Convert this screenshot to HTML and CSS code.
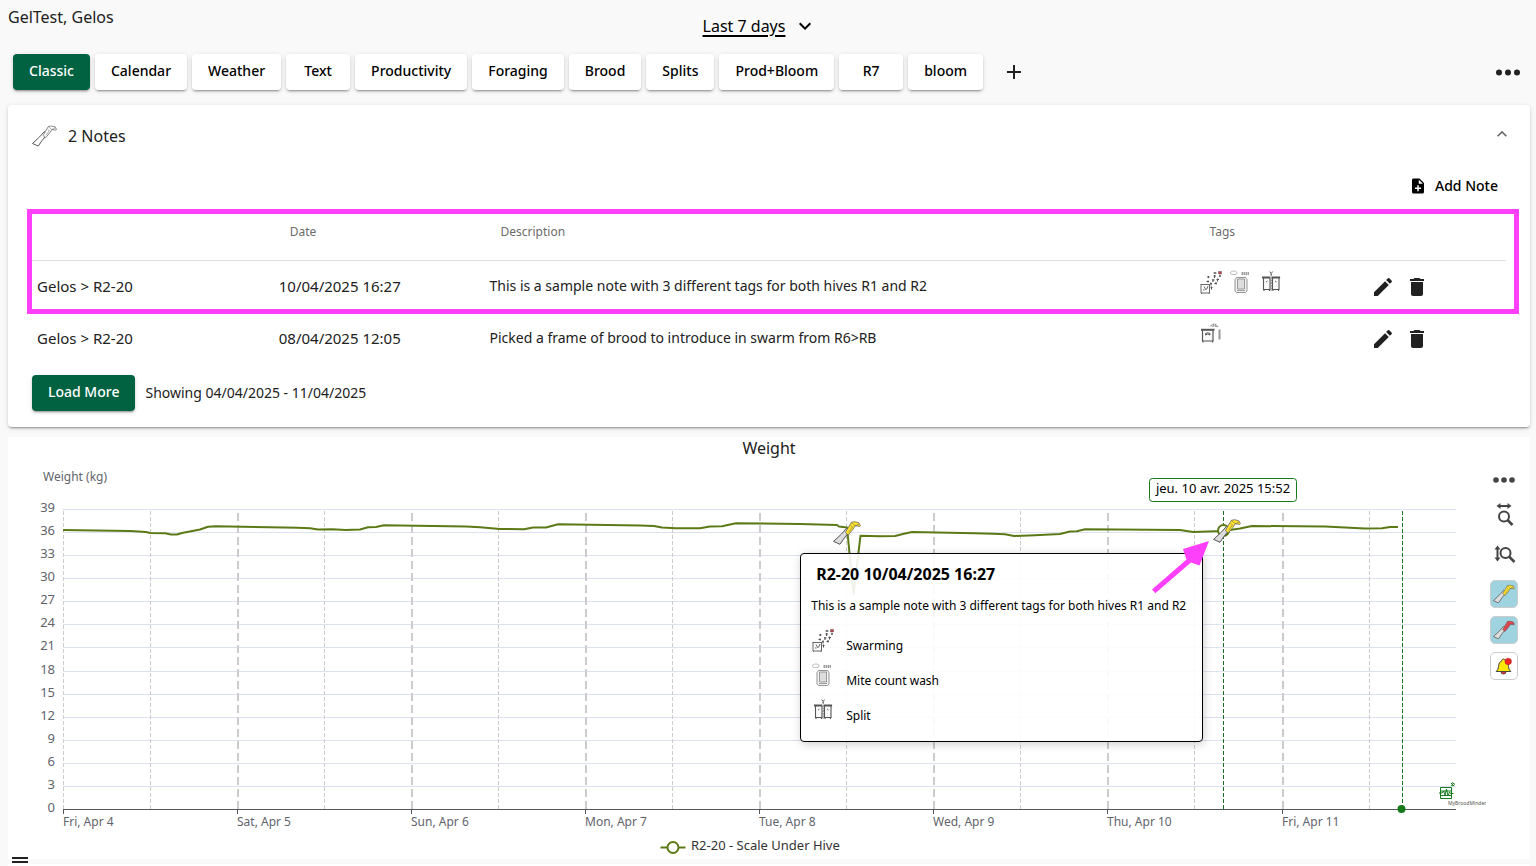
FILE: index.html
```html
<!DOCTYPE html>
<html lang="en">
<head>
<meta charset="utf-8">
<title>GelTest, Gelos</title>
<link rel="stylesheet" href="styles.css">
</head>
<body>
<svg class="sprite" aria-hidden="true">
  <symbol id="hive-tool" viewBox="0 0 28 24">
    <path class="tool-blade" d="M.6 20.4 7 23.3 11.3 17 17.2 9.6 13.6 7.2 8.5 13z"/>
    <path class="tool-handle" d="M12.4 11.5 18.3 1.3 21.5.7 25.8 1.7 27.4 4.6 26.8 5.4 22.3 4.8 20 8.3 15.3 14z"/>
    <path class="tool-detail" d="M18.3 1.3 22 4.8 26 3M17.5 4.5l2 1.5-4 5.5"/>
  </symbol>
  <symbol id="swarm" viewBox="0 0 24 24">
    <path d="M2 14.500h8.500V23H2zM1.500 14.500h9.500M5 16.500l2 3.500M9 16 7.500 19.500M4 20h1.500M2.500 23v1M10 23v1" fill="none" stroke="#666" stroke-width="1"/>
    <path d="M7.500 11.500h2.500M9 10.500v2M8 7h2.500M9.500 6v2M11.500 17.500h2M12.500 16.500v3M11 13.500h2M12 12.500v3M13 10h2.500M14 9v3M14.500 6h2.500M15.500 5v3M14.500 3h3M16 2v2M15.500 13.500h2.500M17 12v2.500M17.500 9.500h2.500M18.500 8.500v3M20 6h2M21 5v2" fill="none" stroke="#555" stroke-width="1.100"/>
    <path d="M19.500 1.500h3V4h-3z" fill="#c3404a" stroke="#555" stroke-width=".5"/>
  </symbol>
  <symbol id="mite" viewBox="0 0 24 24">
    <path d="M1.500 3c0-1.500 2-2 3.500-2s3 .5 3 2-1.500 1.500-3 1.500S1.500 4.500 1.500 3z" fill="#fff" stroke="#aaa" stroke-width=".8"/>
    <path d="M12.500 3.500h7.500M12.500 2.500h7.500M12.500 4.500h7.500" stroke="#888" stroke-width=".8" stroke-dasharray="1.500 .5"/>
    <path d="M7.500 7.500h9l1.500 2v11.500l-1.500 1.500h-9L6 21V9.500z" fill="#f2f2f2" stroke="#888" stroke-width=".9"/>
    <path d="M8.500 9h7v10h-7zM8 20.500h8" fill="#ddd" stroke="#888" stroke-width=".8"/>
  </symbol>
  <symbol id="split" viewBox="0 0 24 24">
    <path d="M4.500 8v11.500H11V8M13.500 8v11.500H20V8M5 19.500V21M10.500 19.500V21M14 19.500V21M19.500 19.500V21" fill="#fafafa" stroke="#555" stroke-width="1.100"/>
    <path d="M3 7.500h8.300M12.800 7.500h8.300" stroke="#555" stroke-width="2"/>
    <path d="M12.200 4v17" stroke="#888" stroke-width="1.200" stroke-dasharray="2 .7"/>
    <path d="m10.700 1.500 1.500 2 1.500-2M12.200 3.500V5M8.500 11 7 12M16 11l1.500 1" fill="none" stroke="#666" stroke-width="1"/>
  </symbol>
  <symbol id="brood-frame" viewBox="0 0 24 24">
    <path d="M3.500 8.500V19H14V8.500M4 19v1.500M13.500 19v1.500" fill="#fafafa" stroke="#555" stroke-width="1.200"/>
    <path d="M2 7.800h13.500" stroke="#555" stroke-width="2"/>
    <path d="M6.500 11.500q2.200-1.500 4.500 0V13Q8.700 11 6.500 13z" fill="none" stroke="#555" stroke-width="1"/>
    <path d="M11.500 4.500Q15-.5 19 5M13.500 4.500q2-2 4 .5" fill="none" stroke="#888" stroke-width="1.100" stroke-dasharray="2 .7"/>
    <path d="M20.500 7.500v10" stroke="#999" stroke-width="2"/>
  </symbol>
  <symbol id="pencil" viewBox="0 0 24 24"><path d="M3 17.250V21h3.750L17.810 9.940l-3.750-3.750zM20.710 7.040a1 1 0 0 0 0-1.410l-2.340-2.340a1 1 0 0 0-1.410 0l-1.830 1.830 3.750 3.750z"/></symbol>
  <symbol id="trash" viewBox="0 0 24 24"><path d="M6 19c0 1.100.9 2 2 2h8c1.100 0 2-.9 2-2V7H6zM19 4h-3.500l-1-1h-5l-1 1H5v2h14z"/></symbol>
</svg>

<header class="topbar">
  <h1 class="place">GelTest, Gelos</h1>
  <button class="range" aria-haspopup="listbox"><span class="range-text">Last 7 days</span>
    <svg class="icon-md" viewBox="0 0 24 24"><path d="M7.410 8.590 12 13.170l4.590-4.580L18 10l-6 6-6-6z"/></svg>
  </button>
</header>

<nav class="tabs">
  <button class="tab tab-active">Classic</button>
  <button class="tab">Calendar</button>
  <button class="tab">Weather</button>
  <button class="tab">Text</button>
  <button class="tab">Productivity</button>
  <button class="tab">Foraging</button>
  <button class="tab">Brood</button>
  <button class="tab">Splits</button>
  <button class="tab">Prod+Bloom</button>
  <button class="tab">R7</button>
  <button class="tab">bloom</button>
  <button class="plain add-tab" aria-label="Add tab"><svg class="icon-md" viewBox="0 0 24 24"><path d="M19 13h-6v6h-2v-6H5v-2h6V5h2v6h6z"/></svg></button>
  <button class="plain more" aria-label="More"><svg class="icon-lg" viewBox="0 0 28 28"><circle cx="5" cy="14.500" r="3"/><circle cx="14" cy="14.500" r="3"/><circle cx="23" cy="14.500" r="3"/></svg></button>
</nav>

<main>
  <section class="card notes">
    <div class="notes-head">
      <svg class="tool-outline" viewBox="0 0 28 24"><use href="#hive-tool"/></svg>
      <h2 class="notes-title">2 Notes</h2>
      <button class="plain collapse" aria-label="Collapse"><svg class="icon-sm" viewBox="0 0 24 24"><path d="m12 8-6 6 1.410 1.410L12 10.830l4.590 4.580L18 14z"/></svg></button>
    </div>
    <div class="notes-actions">
      <button class="plain add-note">
        <svg class="icon-xs" viewBox="0 0 24 24"><path d="M14 2H6c-1.100 0-2 .9-2 2v16c0 1.100.9 2 2 2h12c1.100 0 2-.9 2-2V8zm2 14h-3v3h-2v-3H8v-2h3v-3h2v3h3zm-3-7V3.500L18.500 9z"/></svg>
        Add Note
      </button>
    </div>
    <div class="table-wrap">
      <table class="table">
        <colgroup><col class="col-hive"><col class="col-date"><col class="col-desc"><col class="col-tags"><col></colgroup>
        <thead><tr><th></th><th>Date</th><th>Description</th><th>Tags</th><th></th></tr></thead>
        <tbody>
          <tr>
            <td class="wide-text">Gelos &gt; R2-20</td><td class="wide-text">10/04/2025 16:27</td>
            <td>This is a sample note with 3 different tags for both hives R1 and R2</td>
            <td><div class="tags"><svg class="icon-md"><use href="#swarm"/></svg><svg class="icon-md"><use href="#mite"/></svg><svg class="icon-md"><use href="#split"/></svg></div></td>
            <td><div class="actions"><button class="plain" aria-label="Edit"><svg class="icon-md"><use href="#pencil"/></svg></button><button class="plain" aria-label="Delete"><svg class="icon-md"><use href="#trash"/></svg></button></div></td>
          </tr>
          <tr>
            <td class="wide-text">Gelos &gt; R2-20</td><td class="wide-text">08/04/2025 12:05</td>
            <td>Picked a frame of brood to introduce in swarm from R6&gt;RB</td>
            <td><div class="tags"><svg class="icon-md"><use href="#brood-frame"/></svg></div></td>
            <td><div class="actions"><button class="plain" aria-label="Edit"><svg class="icon-md"><use href="#pencil"/></svg></button><button class="plain" aria-label="Delete"><svg class="icon-md"><use href="#trash"/></svg></button></div></td>
          </tr>
        </tbody>
      </table>
      <div class="highlight"></div>
    </div>
    <div class="notes-foot">
      <button class="tab tab-active">Load More</button>
      <span class="showing">Showing 04/04/2025 - 11/04/2025</span>
    </div>
  </section>

  <section class="chart">
    <h2 class="chart-title">Weight</h2>
    <div class="chart-body">
      <div class="plot">
        <svg class="plot-svg" id="plot" viewBox="8 461 1478 398">
          <g id="grid"></g>
          <text class="axis" x="43" y="481">Weight (kg)</text>
          <path class="axis-line" d="M63 809.500H1456"/>
          <path class="series" d="M63 530 130 531 146 532 150 533 165 533.300 171 534.500 177 534.500 182 533 200 529.500 208 526.700 216 526.300 298 527.700 310 528.200 318 529.500 332 529.200 346 530 360 529.500 368 527.200 376 527 384 525.300 466 526.500 480 527.200 500 529 524 529.200 533 527.500 546 527.500 558 524.300 640 525.500 654 526 662 527.500 676 528.300 700 528.200 710 526.500 722 526.300 736 523.300 800 524 837 525 839 526.500 847 527.500 853.500 594 860.500 535.700 880 536.300 895 536 903 534 912 532 975 533.200 993 533.700 1005 534.300 1014 536 1035 535.300 1060 534 1070 531.500 1077 531.300 1085 529.300 1180 530 1193 532 1223 531 1240 528.500 1252 526 1325 526.500 1365 528.500 1382 528.200 1390 527 1398 527"/>
          <path class="cursor-line" d="M1223.500 511V809"/>
          <path class="now-line" d="M1402.500 511V809"/>
          <circle class="now-dot" cx="1401.500" cy="809" r="4"/>
          <circle class="ring" cx="1223.500" cy="530.500" r="5.500"/>
          <use class="tool-yellow" href="#hive-tool" x="833" y="521" width="28" height="24"/>
          <use class="tool-yellow" href="#hive-tool" x="1213" y="519" width="28" height="24"/>
          <rect class="time-box" x="1149.500" y="478.500" width="147" height="23" rx="3"/>
          <text class="time-text" x="1223" y="493">jeu. 10 avr. 2025 15:52</text>
          <g class="brand"><path d="M1440.500 787.500h11v11h-11zM1440 791h12M1440 795.500h12M1439 793h3l1.500-2 1.500 4 1.500-6 1.500 7 1.500-4 1 1.500h3M1451 783l3 3M1452 782.500l3 2M1451 785l2 1"/></g>
          <text class="brand-text" x="1448" y="805">MyBroodMinder</text>
          <path class="series" d="M660.500 847.500H685.500"/>
          <circle class="ring" cx="673" cy="847.500" r="5.500"/>
          <text class="legend" x="691" y="850">R2-20 - Scale Under Hive</text>
        </svg>
        <div class="tooltip">
          <h3 class="tooltip-title">R2-20 10/04/2025 16:27</h3>
          <p class="tooltip-text">This is a sample note with 3 different tags for both hives R1 and R2</p>
          <ul class="tooltip-list">
            <li><svg class="icon-md"><use href="#swarm"/></svg><span>Swarming</span></li>
            <li><svg class="icon-md"><use href="#mite"/></svg><span>Mite count wash</span></li>
            <li><svg class="icon-md"><use href="#split"/></svg><span>Split</span></li>
          </ul>
        </div>
        <svg class="arrow" viewBox="8 461 1478 398"><path d="m1152 589.500 34.500-30L1183 549 1209 541 1199.500 565.500 1191 562.500 1155.300 593.200z" /></svg>
      </div>
      <div class="tools">
        <button class="plain tool" aria-label="Chart menu"><svg class="icon-md" viewBox="0 0 24 24"><circle cx="4" cy="12" r="2.800"/><circle cx="12" cy="12" r="2.800"/><circle cx="20" cy="12" r="2.800"/></svg></button>
        <button class="plain tool" aria-label="Zoom horizontally"><svg class="icon-md tool-line" viewBox="0 0 24 24"><circle cx="12" cy="12.500" r="5"/><path d="m15.500 16 5 5" stroke-width="2.500"/><path d="M7 2h11"/><path class="solid" d="M4.500 2 8.500-1v6zM19.500 2l-4-3v6z"/></svg></button>
        <button class="plain tool tool-tall" aria-label="Zoom vertically"><svg class="icon-md tool-line" viewBox="0 0 24 24"><circle cx="13.500" cy="10" r="5"/><path d="m17 13.500 5.500 5.500" stroke-width="2.500"/><path d="M5.500 6v9"/><path class="solid" d="M5.500 2.500l3 4h-6zM5.500 18.500l3-4h-6z"/></svg></button>
        <button class="tile tile-on" aria-label="Notes"><svg class="tile-tool tool-yellow" viewBox="0 0 28 24"><use href="#hive-tool"/></svg></button>
        <button class="tile tile-on" aria-label="Inspections"><svg class="tile-tool tool-red" viewBox="0 0 28 24"><use href="#hive-tool"/></svg></button>
        <button class="tile" aria-label="Alerts"><svg class="bell" viewBox="0 0 20 20"><path d="M8 4.500q0-1.500 1.500-1.500T11 4.500q3.500 1.500 3.500 6 0 3 2.300 5H2.200q2.300-2 2.300-5 0-4.500 3.500-6z" fill="#ffe800" stroke="#444"/><path d="M7 15.500a2.500 2.500 0 0 0 5 0z" fill="#e33" stroke="#444"/><circle cx="14.200" cy="5.500" r="3.300" fill="#e22" stroke="#a33" stroke-width=".5"/></svg></button>
      </div>
    </div>
  </section>
  <section class="next-card"></section>
</main>
<button class="menu" aria-label="Open menu"><span class="menu-bar"></span><span class="menu-bar"></span></button>
<script src="chart.js"></script>
</body>
</html>
```
FILE: styles.css
```css
* { box-sizing: border-box; }
body {
  margin: 0;
  padding: 0 6px 0 8px;
  background: #f9f9f9;
  color: #212121;
  font: 14px/20px "Noto Sans", sans-serif;
}
h1, h2, h3, p, ul { margin: 0; padding: 0; font-weight: 400; }
button { font: inherit; color: #000; cursor: pointer; }
svg { display: block; flex: none; }
.sprite { position: absolute; width: 0; height: 0; }
.icon-xs { width: 18px; height: 18px; }
.icon-sm { width: 20px; height: 20px; }
.icon-md { width: 24px; height: 24px; }
.icon-lg { width: 28px; height: 28px; }
.plain { display: flex; align-items: center; padding: 0; border: 0; background: none; fill: #212121; }

.topbar { display: grid; grid-template-columns: 1fr auto 1fr; height: 54px; }
.place { padding-top: 5px; font-size: 16px; line-height: 24px; }
.range {
  display: flex; align-items: center; gap: 8px; height: 51px; margin-right: 18px;
  padding: 0; border: 0; background: none; font-size: 16px;
}
.range-text { text-decoration: underline; text-decoration-thickness: 2px; text-underline-offset: 3px; }

.tabs { display: flex; gap: 5px; padding-left: 5px; }
.tab {
  min-width: 64px; height: 36px; padding: 0 16px 2px; border: 0; border-radius: 4px; background: #fff;
  box-shadow: 0 3px 1px -2px #0003, 0 2px 2px #0002, 0 1px 5px #0000001f;
  font-weight: 500;
}
.tab-active { background: #006241; color: #fff; }
.add-tab { margin-left: 14px; }
.more { margin: 0 8px 0 auto; }

.card {
  margin-top: 15px; padding: 0 24px 16px; border-radius: 4px; background: #fff;
  box-shadow: 0 3px 1px -2px #0003, 0 2px 2px #0002, 0 1px 5px #0000001f;
}
.notes-head { display: flex; align-items: center; height: 63px; padding-bottom: 2px; }
.notes-title { margin-left: 11px; font-size: 16px; line-height: 24px; }
.collapse { margin: 0 -6px 4px auto; fill: #666; }
.tool-outline { width: 25px; height: 22px; --blade: #fff; --handle: #fff; --edge: #444; }
.notes-actions { display: flex; justify-content: flex-end; height: 37px; padding: 0 8px 2px 0; }
.add-note { gap: 8px; font-weight: 500; fill: #000; }

.table-wrap { position: relative; }
.table { width: 100%; border-collapse: collapse; table-layout: fixed; }
.col-hive { width: 16.4%; }
.col-date { width: 14.3%; }
.col-desc { width: 48.1%; }
.col-tags { width: 11.7%; }
th { height: 55px; padding: 0 16px; border-bottom: 1px solid #ddd; color: #6b6b6b; font-size: 12px; font-weight: 400; text-align: left; }
td { height: 52px; padding: 0 5px; }
.wide-text { font-size: 15px; }
.tags { display: flex; gap: 6px; padding-bottom: 8px; }
.actions { display: flex; gap: 10px; padding-top: 2px; }
.highlight { position: absolute; inset: 4px -13px 50px -5px; border: 5px solid #ff40fb; pointer-events: none; }
.notes-foot { display: flex; align-items: center; gap: 10px; padding-top: 11px; }
.showing { padding-bottom: 1px; }

.chart { margin-top: 10px; background: #fff; }
.chart-title { padding-bottom: 2px; font-size: 16px; line-height: 22px; text-align: center; }
.chart-body { display: flex; }
.plot { position: relative; flex: 1; min-width: 0; }
.plot-svg { width: 100%; }
.grid-line { stroke: #dde2f0; }
.day-line { stroke: #ccc; stroke-width: 2; stroke-dasharray: 8 4; }
.half-line { stroke: #ccc; stroke-dasharray: 4 2; }
.axis-line { stroke: #55575c; }
.axis { fill: #62646c; font-size: 12px; }
.axis-y { text-anchor: end; font-size: 13px; }
.series { fill: none; stroke: #5b7a16; stroke-width: 2; stroke-linejoin: round; }
.ring { fill: #fff; stroke: #5b7a16; stroke-width: 2; }
.cursor-line { stroke: #1c6b24; stroke-dasharray: 4 2; }
.now-line { stroke: #147a1c; stroke-dasharray: 4 2; }
.now-dot { fill: #147a1c; }
.time-box { fill: #fff; stroke: #147a1c; }
.time-text { fill: #000; font-size: 13px; text-anchor: middle; }
.brand { fill: none; stroke: #147a1c; }
.brand-text { fill: #555; font-size: 5px; }
.legend { fill: #333; font-size: 13px; }
.tool-yellow { --blade: #ddd; --handle: #ffe32e; --edge: #555; }
.tool-red { --blade: #ddd; --handle: #f0464e; --edge: #555; }
.tool-blade { fill: var(--blade); stroke: var(--edge); }
.tool-handle { fill: var(--handle); stroke: var(--edge); stroke-width: .7; }
.tool-detail { fill: none; stroke: var(--edge); stroke-width: .5; }

.tooltip {
  position: absolute; left: 53.6%; top: 23%; width: 403px; padding: 10px 10px 13px;
  border: 1px solid #000; border-radius: 4px; background: #ffffffe6;
  box-shadow: 1px 2px 10px #0003; color: #000; font-size: 12px;
}
.tooltip-title { padding-left: 5px; font-size: 16px; line-height: 20px; font-weight: 700; }
.tooltip-text { margin: 12px 0 7px; white-space: nowrap; }
.tooltip-list { list-style: none; }
.tooltip-list li { display: flex; align-items: flex-start; gap: 11px; height: 35px; padding-top: 5px; }
.tooltip-list span { padding-top: 8px; }
.arrow { position: absolute; inset: 0; width: 100%; fill: #ff40fb; pointer-events: none; }

.tools { display: flex; flex-direction: column; gap: 8px; width: 44px; padding: 5px 12px 0 4px; }
.tool { justify-content: center; height: 28px; fill: #444; }
.tool-tall { height: 34px; }
.tool-line { fill: none; stroke: #444; stroke-width: 2; overflow: visible; }
.solid { fill: #444; stroke: none; }
.tile { display: grid; place-items: center; height: 28px; padding: 0; border: 1px solid #ccc; border-radius: 5px; background: #fff; }
.tile-on { background: #9fd3e0; }
.tile-tool { width: 22px; height: 20px; }
.bell { width: 20px; height: 20px; }

.next-card { height: 2px; margin-top: 5px; background: #fff; }
.menu { position: fixed; left: 12px; bottom: 3px; display: grid; gap: 2px; width: 16px; padding: 0; border: 0; background: none; }
.menu-bar { height: 2px; background: #212121; }
```
FILE: chart.js
```js
const NS = "http://www.w3.org/2000/svg";
const grid = document.getElementById("grid");

function add(name, cls, attrs, text) {
  const el = document.createElementNS(NS, name);
  el.setAttribute("class", cls);
  for (const key in attrs) el.setAttribute(key, attrs[key]);
  if (text) el.textContent = text;
  grid.appendChild(el);
}

for (let kg = 0; kg <= 39; kg += 3) {
  const y = Math.round(809 - kg * 300 / 39);
  if (kg) add("path", "grid-line", { d: `M63 ${y + 0.5}H1456` });
  add("text", "axis axis-y", { x: 55, y: y + 3 }, String(kg));
}

const days = ["Fri, Apr 4", "Sat, Apr 5", "Sun, Apr 6", "Mon, Apr 7", "Tue, Apr 8", "Wed, Apr 9", "Thu, Apr 10", "Fri, Apr 11"];
days.forEach((label, i) => {
  const x = 63 + Math.floor(i * 174.150);
  if (i) add("path", "day-line", { d: `M${x + 1} 809V513` });
  else add("path", "half-line", { d: `M${x + 0.5} 809V511` });
  add("path", "half-line", { d: `M${x + 87.5} 809V511` });
  add("path", "axis-line", { d: `M${x + 0.5} 809V814` });
  add("text", "axis", { x: x, y: 826 }, label);
});
```
